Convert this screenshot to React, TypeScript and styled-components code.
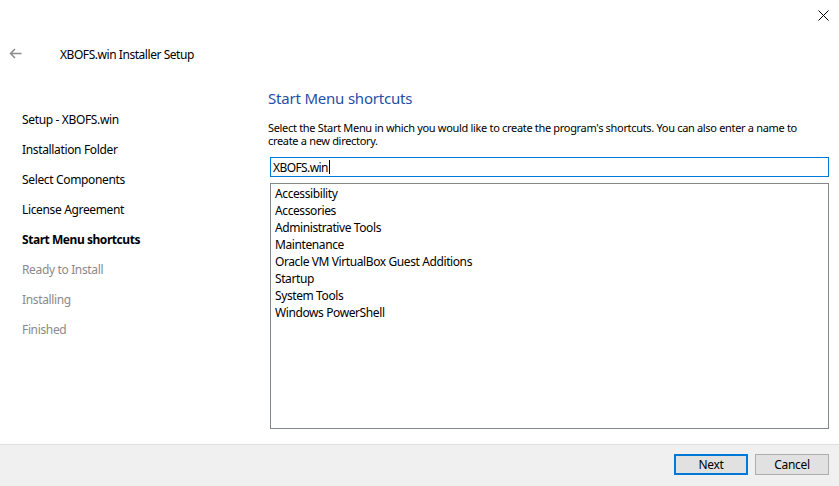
import React from "react";
import styled, { createGlobalStyle } from "styled-components";

const Global = createGlobalStyle`
  html, body { margin: 0; padding: 0; background: #ffffff; }
  body { font-family: "Noto Sans", "Open Sans", sans-serif; font-size: 12px; color: #000; letter-spacing: -0.4px; }
  #root { width: 839px; height: 486px; }
`;

const Window = styled.div`
  width: 839px;
  height: 486px;
  display: flex;
  flex-direction: column;
  background: #ffffff;
  overflow: hidden;
`;

const TitleBar = styled.div`
  height: 30px;
  display: flex;
  justify-content: flex-end;
  align-items: flex-start;
  padding-right: 10px;
`;

const CloseButton = styled.div`
  width: 12px;
  height: 12px;
  margin-top: 9px;
  display: flex;
  align-items: center;
  justify-content: center;
`;

const Header = styled.div`
  height: 50px;
  display: flex;
  align-items: center;
  padding-left: 9px;
`;

const BackArrow = styled.div`
  width: 13px;
  height: 11px;
  display: flex;
  margin-top: -4px;
`;

const HeaderTitle = styled.div`
  margin-left: 38px;
  font-size: 12px;
  line-height: 16px;
  letter-spacing: -0.45px;
  color: #000;
`;

const Body = styled.div`
  flex: 1;
  display: grid;
  grid-template-columns: 268px 1fr;
  min-height: 0;
`;

const Sidebar = styled.div`
  padding-top: 25px;
  padding-left: 22px;
  display: flex;
  flex-direction: column;
`;

const Step = styled.div<{ $state: "done" | "current" | "todo" }>`
  height: 30px;
  line-height: 30px;
  font-size: 12px;
  white-space: nowrap;
  letter-spacing: ${(p) => (p.$state === "current" ? "-0.45px" : "-0.35px")};
  font-weight: ${(p) => (p.$state === "current" ? 700 : 400)};
  color: ${(p) => (p.$state === "todo" ? "#8a8a8a" : "#000")};
`;

const Main = styled.div`
  display: flex;
  flex-direction: column;
  padding: 8px 10px 15px 0;
  min-height: 0;
`;

const PageTitle = styled.h1`
  margin: 0;
  font-size: 15px;
  line-height: 20px;
  font-weight: 400;
  letter-spacing: -0.2px;
  color: #1f4fa8;
`;

const Description = styled.div`
  margin: 13px 0 0 0;
  font-size: 11px;
  letter-spacing: -0.32px;
  white-space: nowrap;
  color: #000;
`;

const DescriptionLine = styled.div`
  height: 13px;
  line-height: 13px;
`;

const TextField = styled.div`
  margin: 10px 0 0 2px;
  height: 20px;
  box-sizing: border-box;
  border: 1px solid #0078d7;
  display: flex;
  align-items: center;
  padding-left: 2px;
  font-size: 12px;
  letter-spacing: -0.6px;
`;

const Caret = styled.span`
  display: inline-block;
  width: 1px;
  height: 14px;
  background: #000;
  margin-left: 1px;
`;

const ListBox = styled.ul`
  margin: 6px 0 0 2px;
  padding: 1px 0 0 4px;
  list-style: none;
  flex: 1;
  box-sizing: border-box;
  border: 1px solid #828790;
`;

const ListItem = styled.li`
  height: 17px;
  line-height: 17px;
  font-size: 12px;
  white-space: nowrap;
`;

const Footer = styled.div`
  height: 42px;
  box-sizing: border-box;
  border-top: 1px solid #dfdfdf;
  background: #f0f0f0;
  display: flex;
  justify-content: flex-end;
  align-items: flex-start;
  gap: 7px;
  padding: 9px 10px 0 0;
`;

const Button = styled.button<{ $primary?: boolean }>`
  width: 74px;
  height: 21px;
  box-sizing: border-box;
  background: #e1e1e1;
  border: ${(p) => (p.$primary ? "2px solid #0078d7" : "1px solid #adadad")};
  font-family: inherit;
  font-size: 12px;
  letter-spacing: -0.3px;
  color: #000;
  padding: 0;
  line-height: 1;
`;

const steps: { label: string; state: "done" | "current" | "todo" }[] = [
  { label: "Setup - XBOFS.win", state: "done" },
  { label: "Installation Folder", state: "done" },
  { label: "Select Components", state: "done" },
  { label: "License Agreement", state: "done" },
  { label: "Start Menu shortcuts", state: "current" },
  { label: "Ready to Install", state: "todo" },
  { label: "Installing", state: "todo" },
  { label: "Finished", state: "todo" },
];

const folders = [
  "Accessibility",
  "Accessories",
  "Administrative Tools",
  "Maintenance",
  "Oracle VM VirtualBox Guest Additions",
  "Startup",
  "System Tools",
  "Windows PowerShell",
];

export default function App() {
  return (
    <>
      <Global />
      <Window>
        <TitleBar>
          <CloseButton>
            <svg width="11" height="11" viewBox="0 0 11 11">
              <path d="M0.5 0.5 L10.5 10.5 M10.5 0.5 L0.5 10.5" stroke="#000" strokeWidth="1" fill="none" />
            </svg>
          </CloseButton>
        </TitleBar>
        <Header>
          <BackArrow>
            <svg width="13" height="11" viewBox="0 0 13 11">
              <path d="M12.5 5.5 H1.5 M6 1 L1.5 5.5 L6 10" stroke="#8c8c8c" strokeWidth="1.5" fill="none" />
            </svg>
          </BackArrow>
          <HeaderTitle>XBOFS.win Installer Setup</HeaderTitle>
        </Header>
        <Body>
          <Sidebar>
            {steps.map((s) => (
              <Step key={s.label} $state={s.state}>
                {s.label}
              </Step>
            ))}
          </Sidebar>
          <Main>
            <PageTitle>Start Menu shortcuts</PageTitle>
            <Description>
              <DescriptionLine>
                Select the Start Menu in which you would like to create the program's shortcuts. You can also enter a name to
              </DescriptionLine>
              <DescriptionLine>create a new directory.</DescriptionLine>
            </Description>
            <TextField>
              XBOFS.win
              <Caret />
            </TextField>
            <ListBox>
              {folders.map((f) => (
                <ListItem key={f}>{f}</ListItem>
              ))}
            </ListBox>
          </Main>
        </Body>
        <Footer>
          <Button $primary>Next</Button>
          <Button>Cancel</Button>
        </Footer>
      </Window>
    </>
  );
}
